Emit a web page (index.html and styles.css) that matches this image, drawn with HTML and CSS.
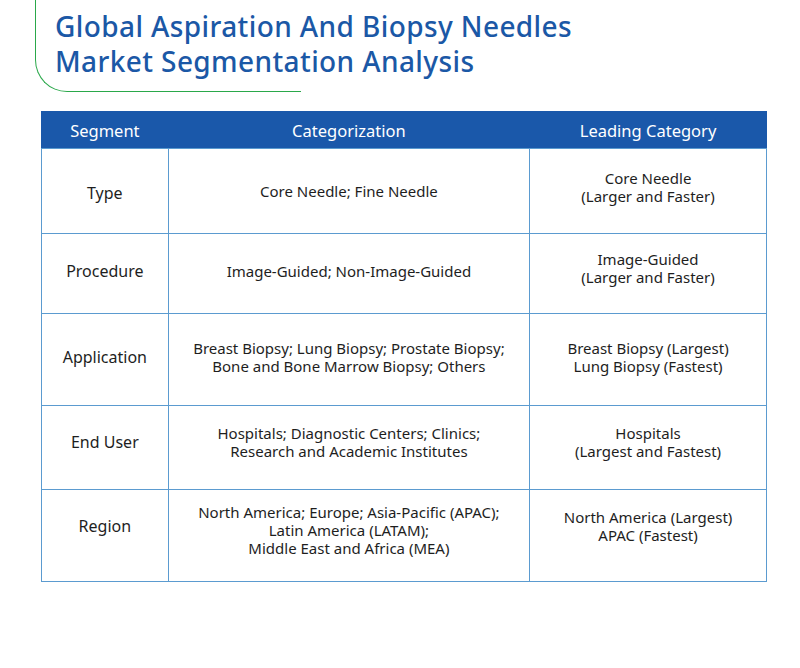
FILE: index.html
```html
<!DOCTYPE html>
<html>
<head>
<meta charset="utf-8">
<link rel="stylesheet" href="styles.css">
</head>
<body>
<div class="page">
  <div class="title-box">
    <h1 class="title">Global Aspiration And Biopsy Needles<br>Market Segmentation Analysis</h1>
  </div>
  <table class="seg">
    <thead>
      <tr><th class="c1">Segment</th><th class="c2">Categorization</th><th class="c3">Leading Category</th></tr>
    </thead>
    <tbody>
      <tr class="r1"><td>Type</td><td>Core Needle; Fine Needle</td><td>Core Needle<br>(Larger and Faster)</td></tr>
      <tr class="r2"><td>Procedure</td><td>Image-Guided; Non-Image-Guided</td><td>Image-Guided<br>(Larger and Faster)</td></tr>
      <tr class="r3"><td>Application</td><td>Breast Biopsy; Lung Biopsy; Prostate Biopsy;<br>Bone and Bone Marrow Biopsy; Others</td><td>Breast Biopsy (Largest)<br>Lung Biopsy (Fastest)</td></tr>
      <tr class="r4"><td>End User</td><td>Hospitals; Diagnostic Centers; Clinics;<br>Research and Academic Institutes</td><td>Hospitals<br>(Largest and Fastest)</td></tr>
      <tr class="r5"><td>Region</td><td>North America; Europe; Asia-Pacific (APAC);<br>Latin America (LATAM);<br>Middle East and Africa (MEA)</td><td>North America (Largest)<br>APAC (Fastest)</td></tr>
    </tbody>
  </table>
</div>
</body>
</html>
```
FILE: styles.css
```css
html, body { margin: 0; padding: 0; background: #fff; }
body { font-family: "Noto Sans", "DejaVu Sans", sans-serif; width: 800px; height: 668px; overflow: hidden; }
.page { position: relative; width: 800px; height: 668px; }
.title-box {
  margin-left: 35px;
  width: 266px;
  height: 92px;
  border-left: 1.5px solid #2aa84a;
  border-bottom: 1.5px solid #2aa84a;
  border-bottom-left-radius: 32px;
  box-sizing: border-box;
  position: relative;
}
.title {
  position: absolute;
  left: 19px;
  top: 9px;
  margin: 0;
  white-space: nowrap;
  font-size: 28px;
  line-height: 35px;
  letter-spacing: 0.4px;
  font-weight: 500;
  color: #1b58a6;
}
.seg {
  margin: 19px 0 0 41px;
  border-collapse: collapse;
  width: 726px;
  font-size: 15px;
  color: #1e1e1e;
}
.seg th {
  background: #1a58aa;
  color: #fff;
  font-weight: 400;
  font-size: 16.5px;
  height: 36px;
  padding: 0;
  border: 1.5px solid #1a58aa;
  border-bottom: 1.5px solid #5b9bd0;
}
.seg td {
  border: 1.5px solid #5b9bd0;
  text-align: center;
  vertical-align: middle;
  padding: 0;
  line-height: 18px;
}
.c1 { width: 126px; }
.c2 { width: 362px; }
.c3 { width: 237px; }
.seg td:first-child { font-size: 16px; }
.r1 { height: 85px; }
.r2 { height: 80px; }
.r3 { height: 92px; }
.r4 { height: 84px; }
.r5 { height: 92px; }
.r1 td:first-child { padding-top: 4px; }
.r1 td:last-child { padding-bottom: 8px; }
.r2 td { padding-bottom: 5px; }
.r2 td:last-child { padding-bottom: 11px; }
.r3 td { padding-bottom: 6px; }
.r4 td { padding-bottom: 11px; }
.r5 td { padding-bottom: 12px; }
.r5 td:first-child { padding-bottom: 20px; }
.r5 td:last-child { padding-bottom: 20px; }
```
